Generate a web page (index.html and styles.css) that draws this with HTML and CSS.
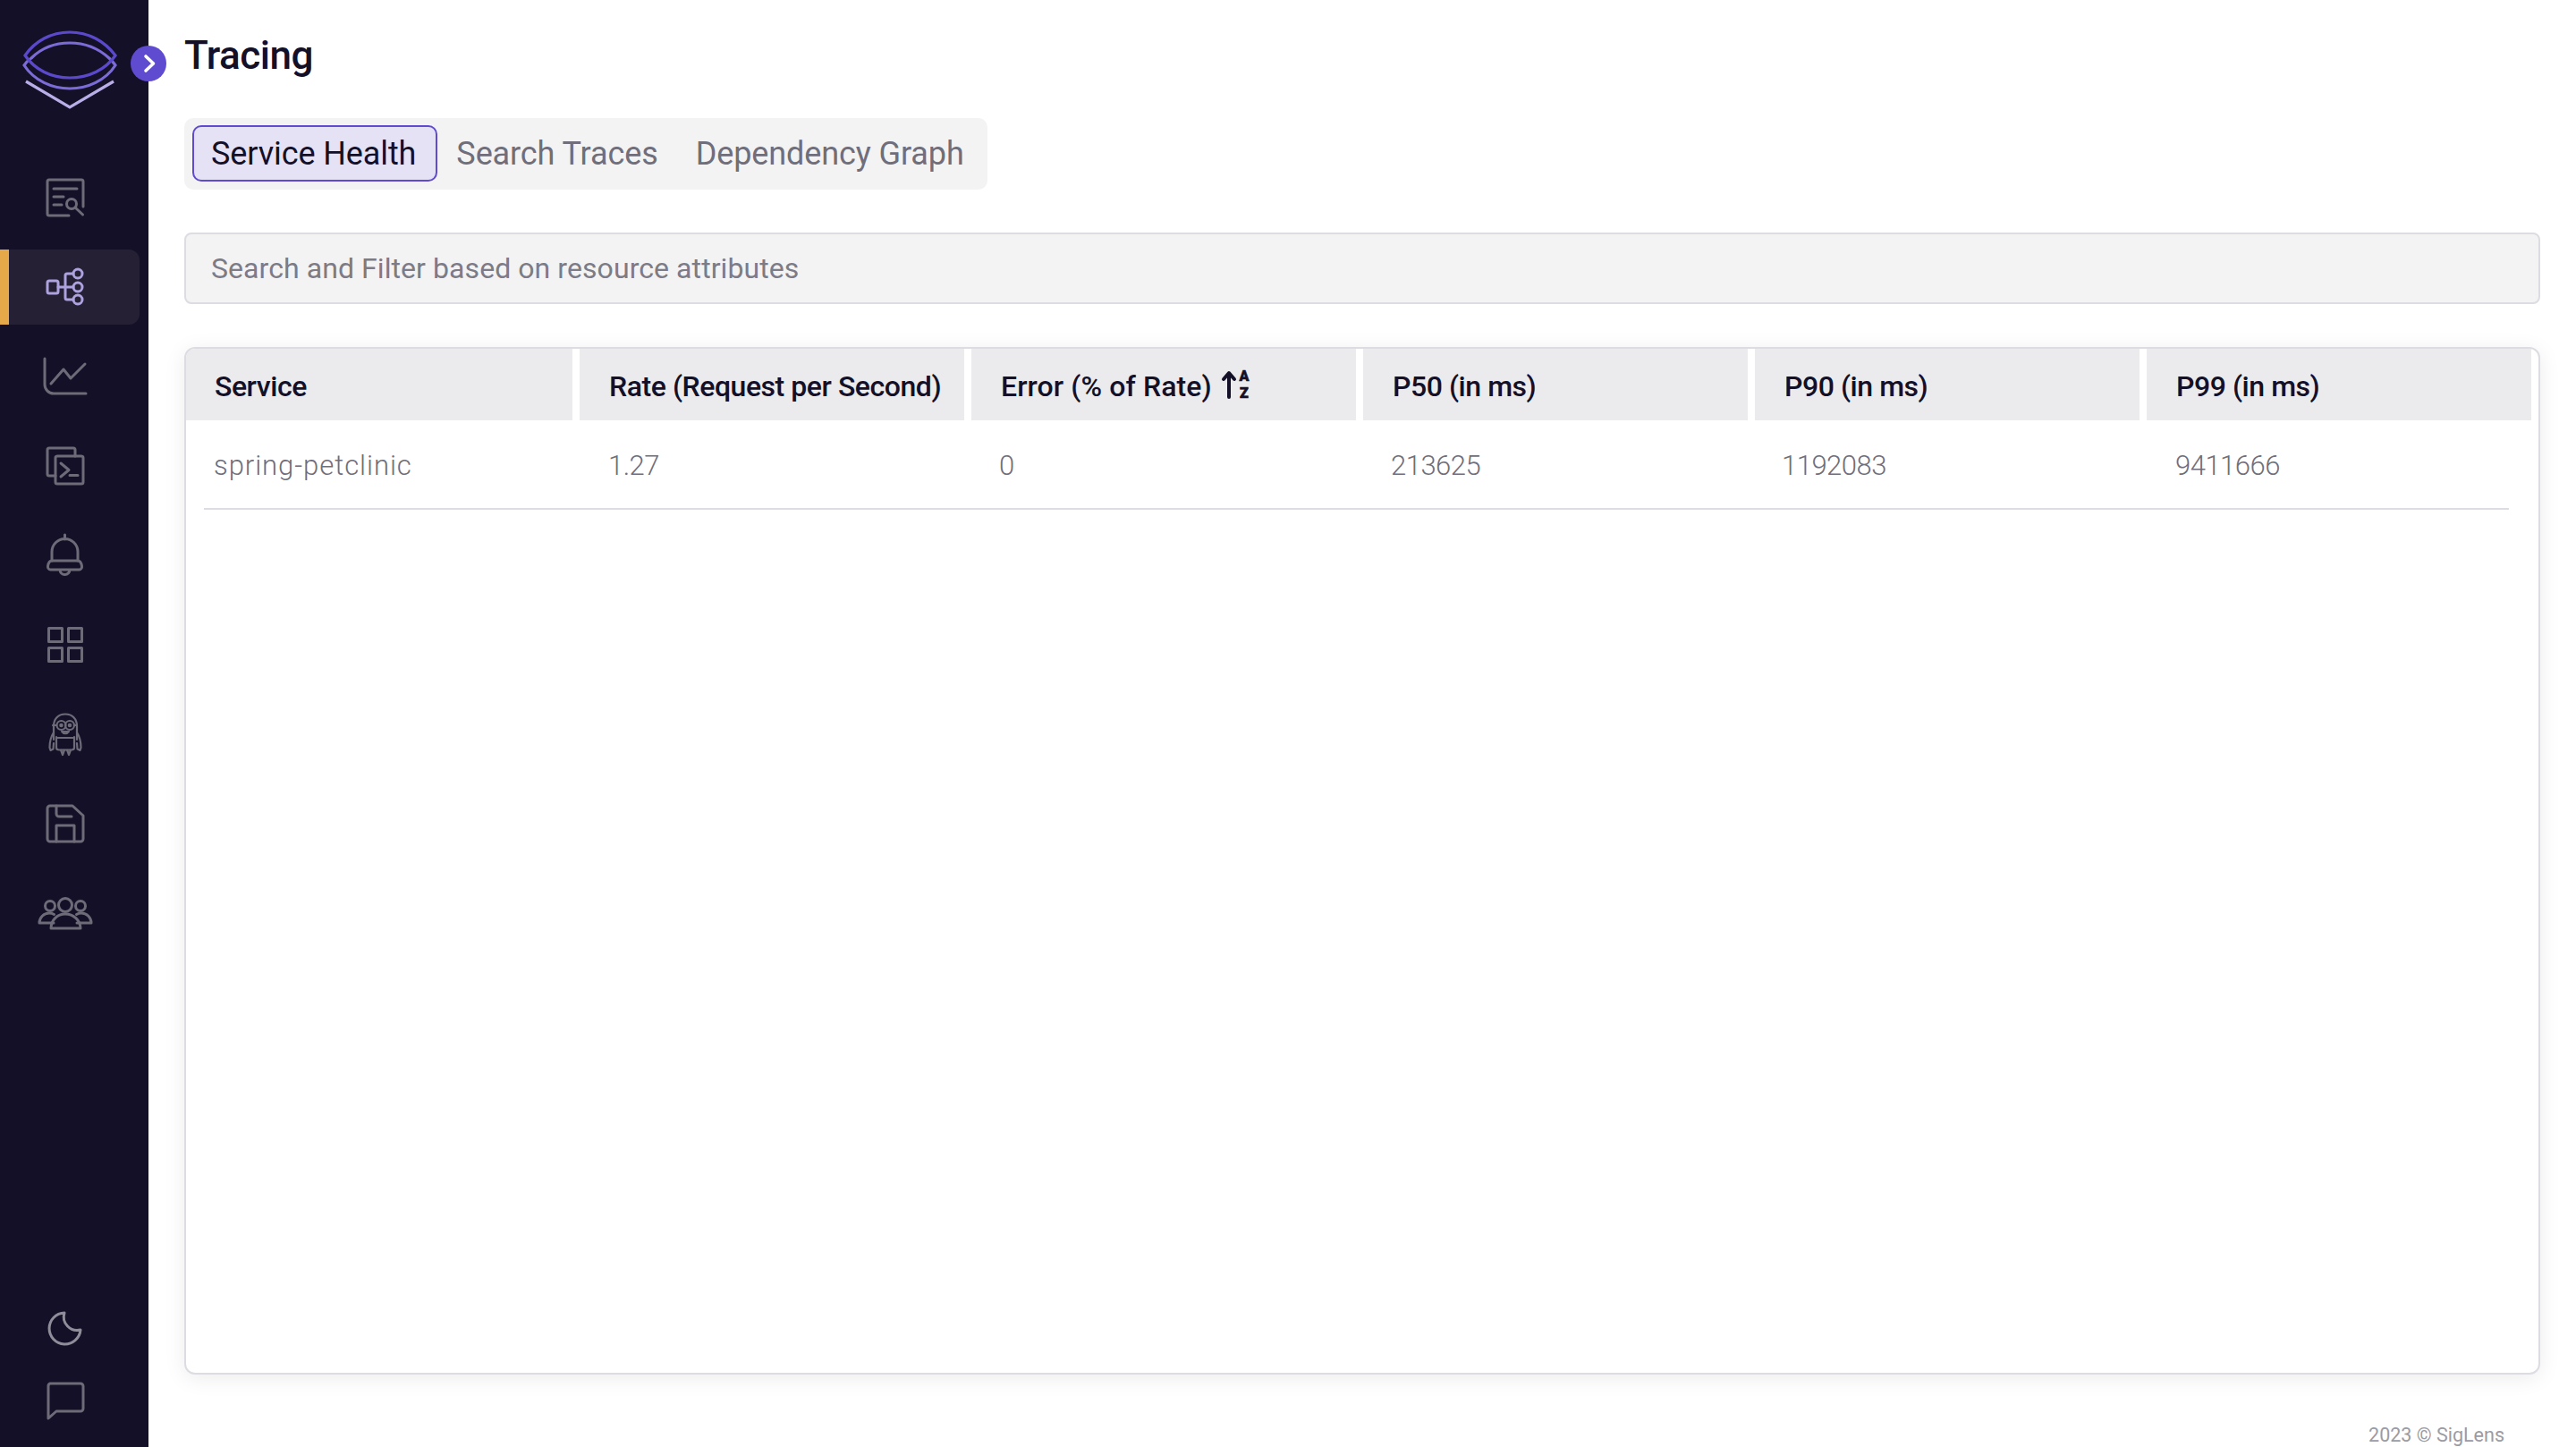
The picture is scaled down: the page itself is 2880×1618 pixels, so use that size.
FILE: index.html
```html
<!DOCTYPE html>
<html lang="en">
<head>
<meta charset="utf-8">
<title>Tracing - SigLens</title>
<link rel="stylesheet" href="styles.css">
</head>
<body>
<div class="app">
  <nav class="sidebar">
    <a class="logo" href="#">
      <svg class="logo-svg" viewBox="0 0 166 130" fill="none" stroke-width="3.2">
        <path stroke="#7a6bd6" d="M27 73C38 90 58 99 78 99s40-9 51-26c-2-3-5-6-7-8C110 54 95 48 78 48S46 54 35 65c-3 2-6 5-8 8z"/>
        <path stroke="#5b49cc" d="M28 62C39 46 57 36 78 36s39 10 51 26C118 78 99 87 78 87S39 78 28 62z"/>
        <path stroke="#b9aee8" d="M29 91l49 29 49-29"/>
      </svg>
    </a>
    <button class="toggle" type="button" aria-label="Expand sidebar">
      <svg viewBox="0 0 40 40" fill="none" stroke="#fff" stroke-width="3.6" stroke-linecap="round" stroke-linejoin="round"><path d="M17 12l8.500 8-8.500 8"/></svg>
    </button>
    <ul class="menu">
      <li class="item"><svg class="icon" viewBox="0 0 48 48"><path d="M28 44H6a2 2 0 0 1-2-2V6a2 2 0 0 1 2-2h36a2 2 0 0 1 2 2v28"/><path d="M11 14h26M11 23h11M11 32h9"/><circle cx="31" cy="31" r="5.500"/><path d="M35 35l8.500 8"/></svg></li>
      <li class="item active"><svg class="icon" viewBox="0 0 48 48"><rect x="4" y="17" width="12" height="14" rx="2"/><circle cx="38" cy="9" r="5"/><circle cx="38" cy="24" r="5"/><circle cx="38" cy="38" r="5"/><path d="M16 24h17M33 9h-7a2 2 0 0 0-2 2v25a2 2 0 0 0 2 2h7"/></svg></li>
      <li class="item"><svg class="icon" viewBox="0 0 48 48"><path d="M1 4v29a10 10 0 0 0 10 10h36"/><path d="M8 32l14-16 8 10 16-16"/></svg></li>
      <li class="item"><svg class="icon" viewBox="0 0 48 48"><path d="M13 35H6a2 2 0 0 1-2-2V6a2 2 0 0 1 2-2h27a2 2 0 0 1 2 2v7"/><rect x="13" y="13" width="31" height="31" rx="2"/><path d="M19 21l9 7.500-9 7.500M29 34.500h9"/></svg></li>
      <li class="item"><svg class="icon" viewBox="0 0 48 48"><path d="M23.500 1v5M9 30V20a14.500 14.500 0 0 1 29 0v10"/><path d="M9 30h29c3 0 4 3 4.500 6 .3 2-1 4-3 4h-32c-2 0-3.300-2-3-4 .5-3 1.500-6 4.500-6zM18 40a5.500 5.500 0 0 0 11 0"/></svg></li>
      <li class="item"><svg class="icon" viewBox="0 0 48 48"><rect x="5.500" y="5.500" width="15" height="15"/><rect x="27.500" y="5.500" width="15" height="15"/><rect x="5.500" y="27.500" width="15" height="15"/><rect x="27.500" y="27.500" width="15" height="15"/></svg></li>
      <li class="item"><svg class="icon thin" viewBox="0 0 48 48"><path d="M11 30V15C11 7 16 1.500 24 1.500S37 7 37 15v15"/><path d="M10 14h4M34 14h3"/><circle cx="19.500" cy="14" r="5"/><circle cx="29" cy="14" r="5"/><circle cx="19.500" cy="14" r="1.200"/><circle cx="29" cy="14" r="1.200"/><path d="M20 21c2 3 6 3 8 0z"/><path d="M14 27v12c0 2 1 2.500 3 2.500h14c2 0 3-.5 3-2.500V27M14 28h20M11 22c-2 3-4.500 9-4.500 17l1 3 3-1.500L11 34M37 22c2 3 4.500 9 4.500 17l-1 3-3-1.500L37 34M19 41.500l2 5.500 2-5.500M26 41.500l2 5.500 2-5.500"/></svg></li>
      <li class="item"><svg class="icon" viewBox="0 0 48 48"><path d="M7 4h25l12 11v26a3 3 0 0 1-3 3H7a3 3 0 0 1-3-3V7a3 3 0 0 1 3-3z"/><path d="M14 4v9a3 3 0 0 0 3 3h14M14 44V26h20v18"/></svg></li>
      <li class="item"><svg class="icon" viewBox="0 0 48 48"><circle cx="24" cy="15" r="7.500"/><circle cx="7" cy="16" r="5.500"/><circle cx="41" cy="16" r="5.500"/><path d="M8 41c0-9 7-16 16-16s17 7 17 16z"/><path d="M11 35H-5c0-6 5-11 11-11 2 0 4 .5 5.500 1.500M37 35h16c0-6-5-11-11-11-2 0-4 .5-5.500 1.500"/></svg></li>
    </ul>
    <ul class="menu-bottom">
      <li class="item-bottom"><svg class="icon light" viewBox="0 0 48 48"><path d="M23 8A17.500 17.500 0 1 0 41 27 15 15 0 0 1 23 8z"/></svg></li>
      <li class="item-bottom"><svg class="icon" viewBox="0 0 48 48"><path d="M7 6h34a3 3 0 0 1 3 3v25a3 3 0 0 1-3 3H14l-9 8V9a3 3 0 0 1 2-3z"/></svg></li>
    </ul>
  </nav>
  <main class="main">
    <h1 class="title">Tracing</h1>
    <div class="tabs">
      <a class="tab selected" href="#">Service Health</a>
      <a class="tab" href="#">Search Traces</a>
      <a class="tab" href="#">Dependency Graph</a>
    </div>
    <input class="search" type="text" placeholder="Search and Filter based on resource attributes">
    <section class="card">
      <div class="head">
        <div class="th th-first">Service</div>
        <div class="th">Rate (Request per Second)</div>
        <div class="th"><span class="th-sorted">Error (% of Rate)</span>
          <svg class="sort" viewBox="0 0 34 32"><path class="sort-arrow" d="M8 30V4M2 10l6-7 6 7"/><text class="sort-letter" x="25" y="11.500">A</text><text class="sort-letter" x="25" y="31">Z</text></svg>
        </div>
        <div class="th">P50 (in ms)</div>
        <div class="th">P90 (in ms)</div>
        <div class="th">P99 (in ms)</div>
      </div>
      <div class="row">
        <div class="cell-name">spring-petclinic</div>
        <div>1.27</div>
        <div>0</div>
        <div>213625</div>
        <div>1192083</div>
        <div>9411666</div>
      </div>
    </section>
    <footer class="footer">2023 © SigLens</footer>
  </main>
</div>
</body>
</html>
```
FILE: styles.css
```css
* { box-sizing: border-box; }
html, body { margin: 0; height: 100%; }
body { font-family: Roboto, "Liberation Sans", sans-serif; background: #fff; color: #141027; }
.app { display: flex; height: 1618px; overflow: hidden; }

.sidebar { position: relative; flex: 0 0 166px; display: flex; flex-direction: column; background: #141027; }
.logo { display: block; height: 179px; }
.logo-svg { display: block; width: 166px; height: 130px; }
.toggle { position: absolute; left: 146px; top: 51px; width: 40px; height: 40px; padding: 0; border: 0; border-radius: 50%; background: #5e4bcf; z-index: 2; }
.toggle svg { display: block; width: 40px; height: 40px; }

.menu, .menu-bottom { list-style: none; margin: 0; padding: 0; }
.menu { display: flex; flex-direction: column; gap: 16px; }
.item { display: flex; align-items: center; width: 156px; height: 84px; padding-left: 49px; }
.item.active { padding-left: 39px; border-left: 10px solid #e6a94a; border-radius: 0 12px 12px 0; background: #252034; }
.menu-bottom { display: flex; flex-direction: column; gap: 33px; margin-top: auto; padding: 0 0 29px 49px; }
.item-bottom { height: 48px; }
.icon { display: block; width: 48px; height: 48px; overflow: visible; fill: none; stroke: #6e6b79; stroke-width: 3; stroke-linecap: round; stroke-linejoin: round; }
.icon.thin { stroke-width: 2.2; }
.icon.light { stroke: #8f8d99; }
.active .icon { stroke: #ada2de; }

.main { flex: 1; min-width: 0; display: flex; flex-direction: column; padding: 32px 40px 0; }
.title { margin: 0 0 40px; font-size: 44px; line-height: 60px; font-weight: 500; letter-spacing: -.5px; color: #141027; }
.tabs { align-self: flex-start; display: flex; width: 898px; height: 80px; padding: 8px 9px; border-radius: 10px; background: #f3f3f4; white-space: nowrap; }
.tab { display: flex; align-items: center; height: 63px; padding: 0 19px; border: 2px solid transparent; border-radius: 10px; font-size: 36px; letter-spacing: -.1px; color: #6f6e7a; text-decoration: none; }
.tab.selected { padding-right: 22px; color: #141027; background: #e5e2f6; border-color: #5e4bcf; }
.search { display: block; width: 100%; height: 80px; margin: 48px 0; padding: 0 28px; border: 2px solid #dcdce2; border-radius: 8px; outline: 0; background: #f3f3f4; font-family: inherit; font-size: 32px; letter-spacing: .07px; color: #141027; }
.search::placeholder { color: #7c7b86; opacity: 1; }

.card { flex: 1; min-height: 0; border: 2px solid #dcdce2; border-radius: 12px; background: #fff; box-shadow: 0 4px 24px rgba(20, 16, 39, .08); }
.head { display: grid; grid-template-columns: 432px repeat(5, 430px); column-gap: 8px; }
.th { display: flex; align-items: center; gap: 11px; height: 80px; padding: 3px 0 0 33px; background: #ebebed; font-size: 32px; font-weight: 500; letter-spacing: -.45px; color: #141027; white-space: nowrap; }
.th-first { padding-left: 32px; border-top-left-radius: 10px; }
.th-sorted { letter-spacing: .1px; }
.sort { flex: none; width: 34px; height: 32px; margin-top: -3px; overflow: visible; }
.sort-arrow { fill: none; stroke: #141027; stroke-width: 4; stroke-linecap: round; stroke-linejoin: round; }
.sort-letter { font-family: Roboto, sans-serif; font-size: 16px; font-weight: 900; fill: #141027; stroke: #141027; stroke-width: .6px; text-anchor: middle; letter-spacing: 0; }
.row { display: grid; grid-template-columns: 441px 437px 438px 437px 440px 1fr; align-items: center; height: 100px; margin: 0 33px 0 20px; padding: 2px 0 0 11px; border-bottom: 2px solid #dcdce2; font-size: 31px; font-weight: 300; letter-spacing: -.5px; color: #6f6e7a; }
.cell-name { letter-spacing: .95px; }
.footer { height: 81px; padding: 54px 40px 0 0; text-align: right; font-size: 21.5px; line-height: 28px; color: #9b9ba4; }
```
